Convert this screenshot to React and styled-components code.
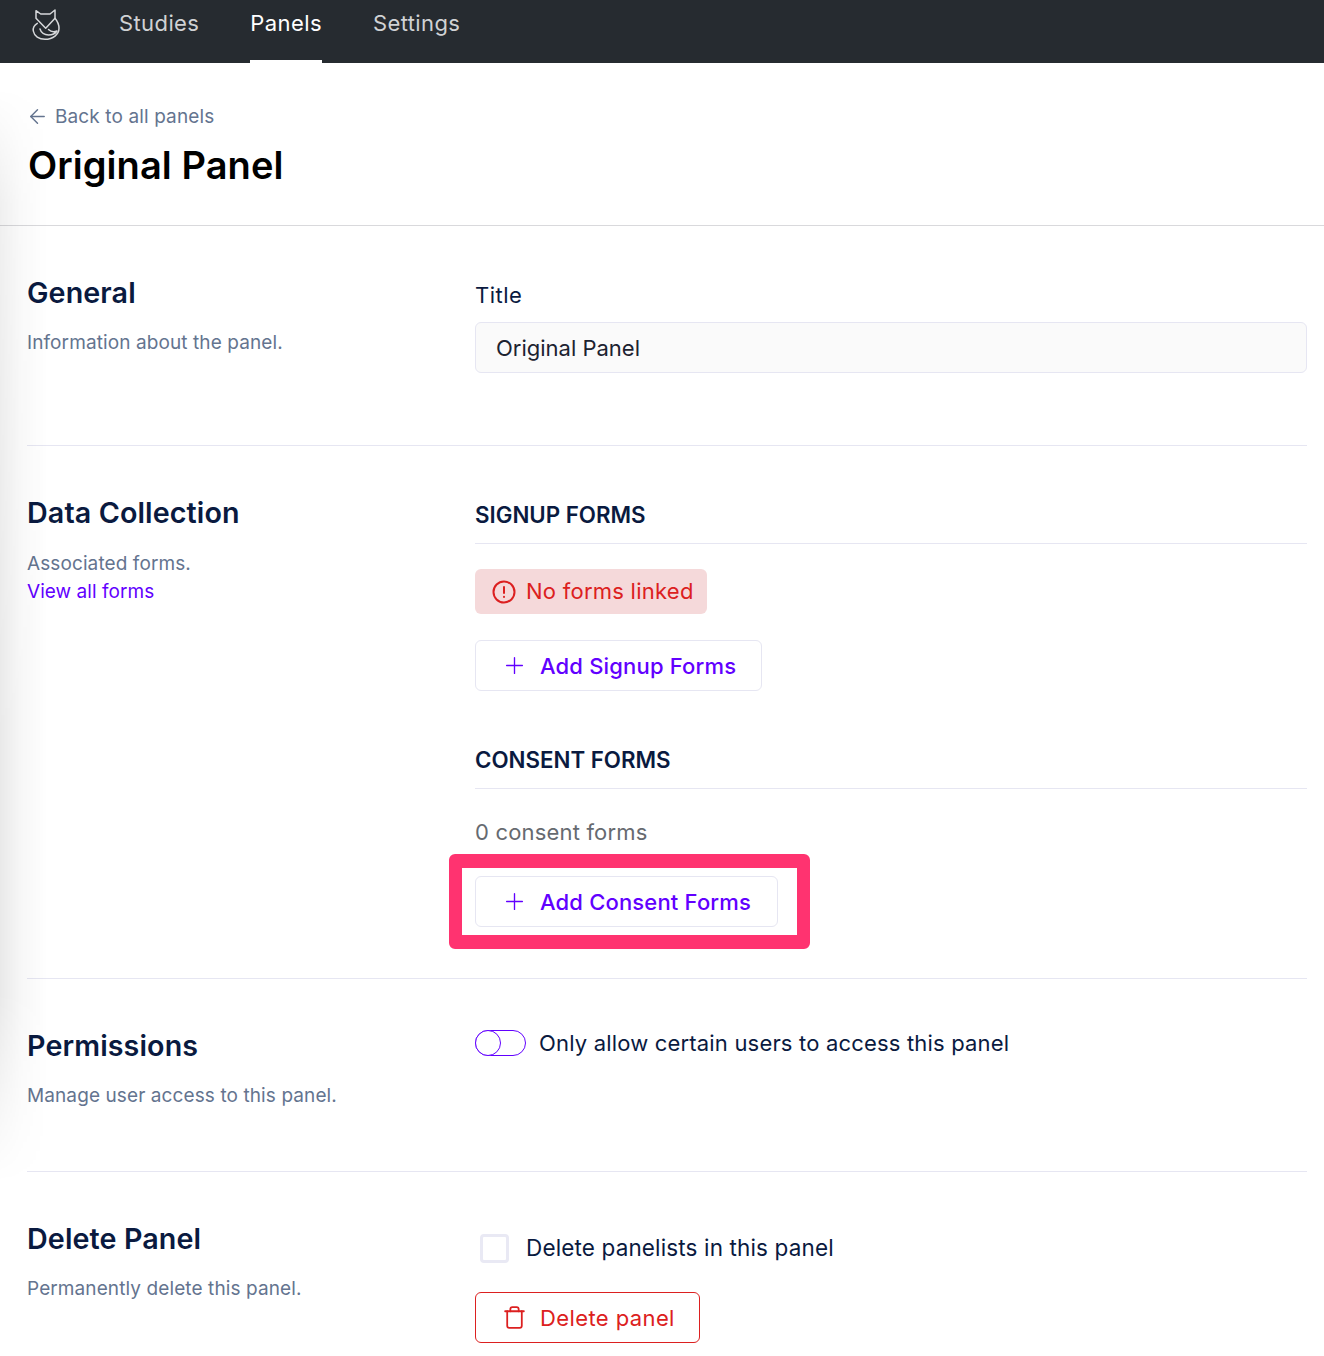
import React from "react";
import styled, { createGlobalStyle } from "styled-components";
import { ArrowLeft, Plus, Trash } from "lucide-react";

const GlobalStyle = createGlobalStyle`
  html, body {
    margin: 0;
    padding: 0;
    background: #fff;
    font-family: Inter, "Liberation Sans", sans-serif;
  }
  * {
    box-sizing: border-box;
  }
`;

const Page = styled.div`
  position: relative;
  width: 1324px;
  height: 1356px;
  overflow: hidden;
  background: #fff;
`;

const EdgeShade = styled.div`
  position: absolute;
  left: 0;
  top: 63px;
  bottom: 0;
  width: 48px;
  pointer-events: none;
  background: linear-gradient(to right, rgba(0, 0, 0, 0.085), rgba(0, 0, 0, 0.03) 45%, rgba(0, 0, 0, 0));
  mask-image: linear-gradient(
    to bottom,
    transparent 25px,
    rgba(0, 0, 0, 0.7) 140px,
    #000 700px,
    #000 930px,
    transparent 1120px
  );
`;

const TopBar = styled.nav`
  height: 63px;
  background: #262b30;
  display: flex;
  align-items: flex-start;
  padding-left: 29px;
`;

const LogoBox = styled.div`
  width: 34px;
  height: 42px;
  margin-right: 56px;
  padding-top: 8px;
`;

const NavLinks = styled.div`
  display: flex;
  gap: 51px;
`;

const NavLink = styled.a`
  height: 63px;
  padding-top: 9px;
  font-size: 22px;
  line-height: 28px;
  letter-spacing: 0.4px;
  color: ${(p) => (p.$active ? "#fff" : "#d0d2d4")};
  border-bottom: 3px solid ${(p) => (p.$active ? "#fff" : "transparent")};
`;

const Header = styled.header`
  height: 163px;
  padding: 40px 28px 0;
  border-bottom: 1px solid #d9d9dc;
`;

const BackLink = styled.a`
  display: flex;
  align-items: center;
  gap: 6px;
  height: 26px;
  margin-left: -2px;
  font-size: 19px;
  letter-spacing: 0.12px;
  color: #64748f;
`;

const PageTitle = styled.h1`
  margin: 13px 0 0;
  font-size: 38px;
  line-height: 46px;
  letter-spacing: 0.06px;
  font-weight: 600;
  color: #000;
`;

const Section = styled.section`
  display: grid;
  grid-template-columns: 448px 832px;
  margin-left: 27px;
  width: 1280px;
  height: ${(p) => p.$height}px;
  padding-top: ${(p) => p.$top}px;
  border-bottom: ${(p) => (p.$last ? "none" : "1px solid #e6e6f2")};
`;

const SectionHeading = styled.h2`
  margin: 0;
  font-size: 28.7px;
  line-height: 36px;
  letter-spacing: 0.1px;
  font-weight: 600;
  color: #0a1a3f;
`;

const Muted = styled.p`
  margin: ${(p) => p.$top || 0}px 0 0;
  font-size: 19px;
  line-height: 28px;
  letter-spacing: 0.1px;
  color: #64748f;
`;

const TextLink = styled.a`
  display: block;
  font-size: 19px;
  line-height: 28px;
  letter-spacing: 0.05px;
  color: #6200ff;
`;

const FieldLabel = styled.label`
  display: block;
  margin-top: 6px;
  font-size: 22px;
  line-height: 28px;
  letter-spacing: 0.5px;
  color: #0a1a3f;
`;

const TitleInput = styled.div`
  height: 51px;
  margin-top: 13px;
  padding: 0 20px;
  display: flex;
  align-items: center;
  background: #fafafa;
  border: 1px solid #e6e6f2;
  border-radius: 6px;
  font-size: 22px;
  color: #1c2230;
`;

const GroupTitle = styled.h3`
  margin: ${(p) => p.$top || 0}px 0 0;
  height: 49px;
  padding-top: 6px;
  border-bottom: 1px solid #e6e6f2;
  font-size: 22.3px;
  line-height: 28px;
  font-weight: 600;
  color: #0a1a3f;
`;

const WarningBadge = styled.div`
  display: flex;
  width: fit-content;
  align-items: center;
  gap: 10px;
  height: 45px;
  margin-top: 25px;
  padding: 0 13px 2px 17px;
  background: #f5d9da;
  border-radius: 6px;
  font-size: 22px;
  letter-spacing: 0.25px;
  color: #dc2020;
  svg {
    margin-top: 2px;
  }
`;

const OutlineButton = styled.button`
  display: flex;
  align-items: center;
  width: ${(p) => p.$width}px;
  height: 51px;
  margin: ${(p) => p.$top || 0}px 0 0;
  padding: 0 0 0 ${(p) => (p.$danger ? 26 : 25)}px;
  gap: ${(p) => (p.$danger ? 13 : 12)}px;
  background: #fff;
  border: 1px solid ${(p) => (p.$danger ? "#dc2020" : "#e6e6f2")};
  border-radius: 6px;
  font-family: inherit;
  font-size: 22px;
  letter-spacing: ${(p) => (p.$danger ? 0.4 : 0.17)}px;
  white-space: nowrap;
  font-weight: ${(p) => (p.$danger ? 400 : 500)};
  color: ${(p) => (p.$danger ? "#dc2020" : "#6200ff")};
`;

const CountText = styled.div`
  margin-top: 28px;
  font-size: 22px;
  line-height: 30px;
  letter-spacing: 0.18px;
  color: #666a70;
`;

const Highlight = styled.div`
  position: relative;
  margin-top: 29px;
  width: fit-content;
  &::after {
    content: "";
    box-sizing: border-box;
    position: absolute;
    left: -26px;
    top: -22px;
    width: 361px;
    height: 95px;
    border-style: solid;
    border-color: #ff3370;
    border-width: 14px 13px;
    border-radius: 6px;
    pointer-events: none;
  }
`;

const ToggleRow = styled.div`
  display: flex;
  align-items: center;
  gap: 13px;
  font-size: 22px;
  line-height: 30px;
  letter-spacing: 0.18px;
  color: #0a1a3f;
`;

const Toggle = styled.div`
  position: relative;
  width: 51px;
  height: 26px;
  border: 1px solid #6200ff;
  border-radius: 13px;
  background: #fff;
  &::before {
    content: "";
    box-sizing: border-box;
    position: absolute;
    left: -1px;
    top: -1px;
    width: 26px;
    height: 26px;
    border: 1px solid #6200ff;
    border-radius: 50%;
    background: #fff;
  }
`;

const CheckRow = styled.div`
  display: flex;
  align-items: center;
  gap: 17px;
  margin-top: 12px;
  padding-left: 5px;
  font-size: 22.5px;
  line-height: 30px;
  letter-spacing: 0.14px;
  color: #0a1a3f;
`;

const CheckBox = styled.div`
  width: 29px;
  height: 29px;
  border: 3px solid #e9e9f4;
  border-radius: 4px;
  background: #fff;
`;

const FoxLogo = () => (
  <svg width="34" height="34" viewBox="0 0 34 34" fill="none" stroke="#d6d8da" strokeWidth="1.5" strokeLinejoin="round" strokeLinecap="round">
    <path d="M7 2.700L11.700 6H21l5-4v8.300l-9.300 10L7 10.300z" />
    <path d="M8.300 15.300C5.500 17 3.800 20 4.300 23c.9 5 5.700 8.300 11.700 8.300 8 0 14-5 14-11 0-3.500-1.500-7-4-10" />
    <path d="M11 21c1 3.500 4.500 6 8.500 6 3.500 0 6.500-1 8.500-4-2.500 1-6 1-8.500-1.500" />
  </svg>
);

const AlertIcon = () => (
  <svg width="24" height="24" viewBox="0 0 24 24" fill="none" stroke="#dc2020" strokeWidth="2" strokeLinecap="round">
    <circle cx="12" cy="12" r="10.500" />
    <path d="M12 7v6" />
    <path d="M12 16.800v.2" />
  </svg>
);

export default function App() {
  return (
    <Page>
      <GlobalStyle />
      <TopBar>
        <LogoBox>
          <FoxLogo />
        </LogoBox>
        <NavLinks>
          <NavLink>Studies</NavLink>
          <NavLink $active>Panels</NavLink>
          <NavLink>Settings</NavLink>
        </NavLinks>
      </TopBar>
      <Header>
        <BackLink>
          <ArrowLeft size={23} strokeWidth={1.5} />
          Back to all panels
        </BackLink>
        <PageTitle>Original Panel</PageTitle>
      </Header>
      <Section $height={220} $top={49}>
        <div>
          <SectionHeading>General</SectionHeading>
          <Muted $top={18}>Information about the panel.</Muted>
        </div>
        <div>
          <FieldLabel>Title</FieldLabel>
          <TitleInput>Original Panel</TitleInput>
        </div>
      </Section>
      <Section $height={533} $top={49}>
        <div>
          <SectionHeading>Data Collection</SectionHeading>
          <Muted $top={19}>Associated forms.</Muted>
          <TextLink>View all forms</TextLink>
        </div>
        <div>
          <GroupTitle>SIGNUP FORMS</GroupTitle>
          <WarningBadge>
            <AlertIcon />
            No forms linked
          </WarningBadge>
          <OutlineButton $top={26} $width={287}>
            <Plus size={27} strokeWidth={1.2} />
            Add Signup Forms
          </OutlineButton>
          <GroupTitle $top={49}>CONSENT FORMS</GroupTitle>
          <CountText>0 consent forms</CountText>
          <Highlight>
            <OutlineButton $width={303}>
              <Plus size={27} strokeWidth={1.2} />
              Add Consent Forms
            </OutlineButton>
          </Highlight>
        </div>
      </Section>
      <Section $height={193} $top={49}>
        <div>
          <SectionHeading>Permissions</SectionHeading>
          <Muted $top={18}>Manage user access to this panel.</Muted>
        </div>
        <div>
          <ToggleRow>
            <Toggle />
            Only allow certain users to access this panel
          </ToggleRow>
        </div>
      </Section>
      <Section $height={185} $top={49} $last>
        <div>
          <SectionHeading>Delete Panel</SectionHeading>
          <Muted $top={18}>Permanently delete this panel.</Muted>
        </div>
        <div>
          <CheckRow>
            <CheckBox />
            Delete panelists in this panel
          </CheckRow>
          <OutlineButton $danger $top={29} $width={225}>
            <Trash size={25} strokeWidth={1.7} />
            Delete panel
          </OutlineButton>
        </div>
      </Section>
      <EdgeShade />
    </Page>
  );
}
